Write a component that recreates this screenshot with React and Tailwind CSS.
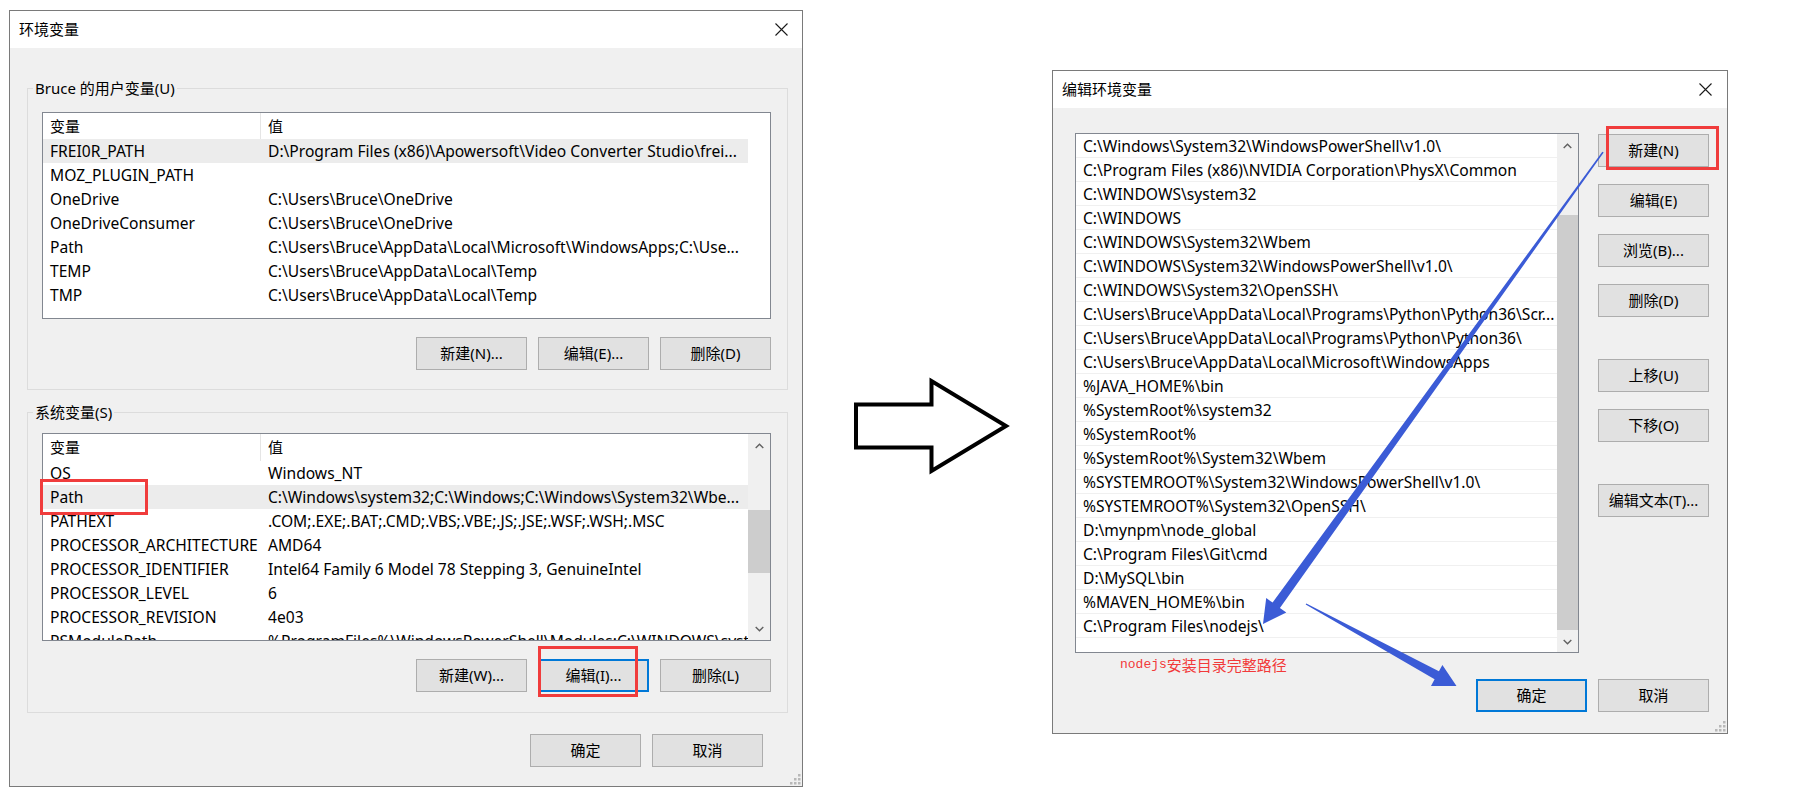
import React from 'react';

const userVars = [
  ['FREI0R_PATH', 'D:\\Program Files (x86)\\Apowersoft\\Video Converter Studio\\frei...'],
  ['MOZ_PLUGIN_PATH', ''],
  ['OneDrive', 'C:\\Users\\Bruce\\OneDrive'],
  ['OneDriveConsumer', 'C:\\Users\\Bruce\\OneDrive'],
  ['Path', 'C:\\Users\\Bruce\\AppData\\Local\\Microsoft\\WindowsApps;C:\\Use...'],
  ['TEMP', 'C:\\Users\\Bruce\\AppData\\Local\\Temp'],
  ['TMP', 'C:\\Users\\Bruce\\AppData\\Local\\Temp'],
];

const sysVars = [
  ['OS', 'Windows_NT'],
  ['Path', 'C:\\Windows\\system32;C:\\Windows;C:\\Windows\\System32\\Wbe...'],
  ['PATHEXT', '.COM;.EXE;.BAT;.CMD;.VBS;.VBE;.JS;.JSE;.WSF;.WSH;.MSC'],
  ['PROCESSOR_ARCHITECTURE', 'AMD64'],
  ['PROCESSOR_IDENTIFIER', 'Intel64 Family 6 Model 78 Stepping 3, GenuineIntel'],
  ['PROCESSOR_LEVEL', '6'],
  ['PROCESSOR_REVISION', '4e03'],
  ['PSModulePath', '%ProgramFiles%\\WindowsPowerShell\\Modules;C:\\WINDOWS\\system32\\...'],
];

const paths = [
  'C:\\Windows\\System32\\WindowsPowerShell\\v1.0\\',
  'C:\\Program Files (x86)\\NVIDIA Corporation\\PhysX\\Common',
  'C:\\WINDOWS\\system32',
  'C:\\WINDOWS',
  'C:\\WINDOWS\\System32\\Wbem',
  'C:\\WINDOWS\\System32\\WindowsPowerShell\\v1.0\\',
  'C:\\WINDOWS\\System32\\OpenSSH\\',
  'C:\\Users\\Bruce\\AppData\\Local\\Programs\\Python\\Python36\\Scr...',
  'C:\\Users\\Bruce\\AppData\\Local\\Programs\\Python\\Python36\\',
  'C:\\Users\\Bruce\\AppData\\Local\\Microsoft\\WindowsApps',
  '%JAVA_HOME%\\bin',
  '%SystemRoot%\\system32',
  '%SystemRoot%',
  '%SystemRoot%\\System32\\Wbem',
  '%SYSTEMROOT%\\System32\\WindowsPowerShell\\v1.0\\',
  '%SYSTEMROOT%\\System32\\OpenSSH\\',
  'D:\\mynpm\\node_global',
  'C:\\Program Files\\Git\\cmd',
  'D:\\MySQL\\bin',
  '%MAVEN_HOME%\\bin',
  'C:\\Program Files\\nodejs\\',
];

function CloseX() {
  return (
    <svg width="13" height="13" viewBox="0 0 13 13">
      <path d="M0.5 0.5L12.5 12.5M12.5 0.5L0.5 12.5" stroke="#1a1a1a" strokeWidth="1.1" fill="none" />
    </svg>
  );
}

function Chevron({ down }) {
  return (
    <svg width="9" height="6" viewBox="0 0 9 6">
      <path d={down ? 'M0.7 1L4.5 4.8L8.3 1' : 'M0.7 5L4.5 1.2L8.3 5'} stroke="#606060" strokeWidth="1.4" fill="none" />
    </svg>
  );
}

function Btn({ children, focused }) {
  return (
    <div
      className={
        focused
          ? 'flex h-[33px] w-[111px] shrink-0 items-center justify-center border-2 border-[#0078d7] bg-[#e1e1e1] text-[15px] text-black'
          : 'flex h-[33px] w-[111px] shrink-0 items-center justify-center border border-[#adadad] bg-[#e1e1e1] text-[15px] text-black'
      }
    >
      {children}
    </div>
  );
}

function TitleBar({ title }) {
  return (
    <div className="flex h-[37px] shrink-0 items-center justify-between bg-white pl-[9px] pr-[14px] text-[15px] text-black">
      <span>{title}</span>
      <CloseX />
    </div>
  );
}

function Grip() {
  return (
    <svg className="absolute bottom-[1px] right-[1px]" width="12" height="12" viewBox="0 0 12 12">
      <rect x="9" y="1" width="2.5" height="2.5" fill="#b8b8b8" />
      <rect x="5" y="5" width="2.5" height="2.5" fill="#b8b8b8" />
      <rect x="9" y="5" width="2.5" height="2.5" fill="#b8b8b8" />
      <rect x="1" y="9" width="2.5" height="2.5" fill="#b8b8b8" />
      <rect x="5" y="9" width="2.5" height="2.5" fill="#b8b8b8" />
      <rect x="9" y="9" width="2.5" height="2.5" fill="#b8b8b8" />
    </svg>
  );
}

function Header({ tall }) {
  return (
    <div className={tall ? 'flex h-[27px] shrink-0 items-center text-[15px] text-black' : 'flex h-[26px] shrink-0 items-center text-[15px] text-black'}>
      <div className="flex h-full w-[218px] shrink-0 items-center border-r border-[#e5e5e5] pl-[7px]">变量</div>
      <div className="pl-[7px]">值</div>
    </div>
  );
}

function VarRow({ name, value, sel }) {
  return (
    <div
      className={
        sel
          ? 'flex h-[24px] shrink-0 items-center bg-[#ececec] pt-[2px] text-[15.6px] text-black'
          : 'flex h-[24px] shrink-0 items-center pt-[2px] text-[15.6px] text-black'
      }
    >
      <div className="w-[218px] shrink-0 overflow-hidden whitespace-nowrap pl-[7px]">{name}</div>
      <div className="min-w-0 flex-1 overflow-hidden whitespace-nowrap pl-[7px]">{value}</div>
    </div>
  );
}

function RedBox({ className }) {
  return <div className={'pointer-events-none absolute border-[3px] border-[#f03c3c] ' + className} />;
}

function LeftDialog() {
  return (
    <div className="relative mt-[10px] flex h-[777px] w-[794px] shrink-0 flex-col border border-[#7a7a7a] bg-[#f0f0f0]">
      <TitleBar title="环境变量" />
      <div className="flex flex-col pl-[17px] pr-[14px]">
        <fieldset className="mt-[30px] border border-[#dcdcdc] pb-[19px] pl-[14px] pr-[16px]">
          <legend className="-ml-[9px] px-[2px] text-[15px] leading-[20px] text-black">Bruce 的用户变量(U)</legend>
          <div className="mt-[14px] flex h-[207px] border border-[#828790] bg-white">
            <div className="flex w-[705px] flex-col overflow-hidden">
              <Header />
              {userVars.map((r, i) => (
                <VarRow key={i} name={r[0]} value={r[1]} sel={i === 0} />
              ))}
            </div>
            <div className="flex-1" />
          </div>
          <div className="mt-[18px] flex justify-end gap-[11px]">
            <Btn>新建(N)...</Btn>
            <Btn>编辑(E)...</Btn>
            <Btn>删除(D)</Btn>
          </div>
        </fieldset>

        <fieldset className="mt-[12px] border border-[#dcdcdc] pb-[20px] pl-[14px] pr-[16px]">
          <legend className="-ml-[9px] px-[2px] text-[15px] leading-[20px] text-black">系统变量(S)</legend>
          <div className="relative mt-[11px]">
            <div className="flex h-[208px] border border-[#828790] bg-white">
              <div className="flex w-[705px] flex-col overflow-hidden">
                <Header tall />
                {sysVars.map((r, i) => (
                  <VarRow key={i} name={r[0]} value={r[1]} sel={i === 1} />
                ))}
              </div>
              <div className="flex flex-1 flex-col bg-[#f0f0f0]">
                <div className="flex h-[23px] shrink-0 items-center justify-center">
                  <Chevron />
                </div>
                <div className="flex-1">
                  <div className="mt-[53px] h-[63px] bg-[#cdcdcd]" />
                </div>
                <div className="flex h-[23px] shrink-0 items-center justify-center">
                  <Chevron down />
                </div>
              </div>
            </div>
            <RedBox className="left-[-2px] top-[46px] h-[36px] w-[108px]" />
          </div>
          <div className="mt-[18px] flex justify-end gap-[11px]">
            <Btn>新建(W)...</Btn>
            <div className="relative">
              <Btn focused>编辑(I)...</Btn>
              <RedBox className="left-[0px] top-[-13px] h-[51px] w-[100px]" />
            </div>
            <Btn>删除(L)</Btn>
          </div>
        </fieldset>

        <div className="mr-[25px] mt-[21px] flex justify-end gap-[11px]">
          <Btn>确定</Btn>
          <Btn>取消</Btn>
        </div>
      </div>
      <Grip />
    </div>
  );
}

function BigArrow() {
  return (
    <svg className="ml-[49px] mt-[377px] shrink-0" width="160" height="100" viewBox="0 0 160 100">
      <polygon
        points="4,27.5 79.5,27.5 79.5,4 154,49 79.5,94 79.5,70.5 4,70.5"
        fill="#ffffff"
        stroke="#000000"
        strokeWidth="4"
        strokeLinejoin="miter"
      />
    </svg>
  );
}

function RightDialog() {
  return (
    <div className="relative ml-[40px] mt-[70px] flex h-[664px] w-[676px] shrink-0 flex-col border border-[#7a7a7a] bg-[#f0f0f0]">
      <div className="flex h-[37px] shrink-0 items-center justify-between bg-white pl-[9px] pr-[15px] text-[15px] text-black">
        <span>编辑环境变量</span>
        <CloseX />
      </div>
      <div className="flex pl-[22px] pr-[18px] pt-[25px]">
        <div className="flex h-[520px] w-[504px] shrink-0 border border-[#828790] bg-white">
          <div className="flex w-[481px] flex-col overflow-hidden">
            {paths.map((p, i) => (
              <div
                key={i}
                className="flex h-[24px] shrink-0 items-center overflow-hidden whitespace-nowrap border-b border-[#f0f0f0] pl-[7px] pt-[3px] text-[15.6px] text-black"
              >
                {p}
              </div>
            ))}
          </div>
          <div className="flex flex-1 flex-col bg-[#f0f0f0]">
            <div className="flex h-[23px] shrink-0 items-center justify-center">
              <Chevron />
            </div>
            <div className="flex-1">
              <div className="mt-[58px] h-[415px] bg-[#cdcdcd]" />
            </div>
            <div className="flex h-[23px] shrink-0 items-center justify-center">
              <Chevron down />
            </div>
          </div>
        </div>
        <div className="ml-[19px] flex flex-col">
          <div className="relative mt-[1px]">
            <Btn>新建(N)</Btn>
            <RedBox className="left-[8px] top-[-8px] h-[44px] w-[113px]" />
          </div>
          <div className="mt-[17px]">
            <Btn>编辑(E)</Btn>
          </div>
          <div className="mt-[17px]">
            <Btn>浏览(B)...</Btn>
          </div>
          <div className="mt-[17px]">
            <Btn>删除(D)</Btn>
          </div>
          <div className="mt-[42px]">
            <Btn>上移(U)</Btn>
          </div>
          <div className="mt-[17px]">
            <Btn>下移(O)</Btn>
          </div>
          <div className="mt-[42px]">
            <Btn>编辑文本(T)...</Btn>
          </div>
        </div>
      </div>
      <div className="mt-[26px] flex justify-end gap-[11px] pr-[18px]">
        <Btn focused>确定</Btn>
        <Btn>取消</Btn>
      </div>
      <div className="absolute left-[67px] top-[586px] flex items-center leading-[16px] text-[#f23a3a]">
        <span className="font-['Liberation_Mono',monospace] text-[13px]">nodejs</span>
        <span className="font-['Noto_Sans_CJK_SC',sans-serif] text-[15px]">安装目录完整路径</span>
      </div>
      <Grip />
    </div>
  );
}

function BlueArrows() {
  return (
    <svg className="pointer-events-none absolute left-0 top-0" width="1807" height="793" viewBox="0 0 1807 793">
      <polygon
        points="1602.3,151.7 1603.7,152.4 1279.9,607.9 1286.3,612.6 1263,624 1266.2,597.9 1272.6,602.6"
        fill="#3b5bd6"
      />
      <polygon
        points="1306.3,603.5 1438.9,671.3 1442.4,665 1456.5,686 1431,686 1434.6,679.3 1305.7,604.5"
        fill="#3b5bd6"
      />
    </svg>
  );
}

export default function App() {
  return (
    <div className="relative flex h-[793px] w-[1807px] items-start overflow-hidden bg-white pl-[9px] font-['Noto_Sans','Noto_Sans_CJK_SC',sans-serif]">
      <LeftDialog />
      <BigArrow />
      <RightDialog />
      <BlueArrows />
    </div>
  );
}
